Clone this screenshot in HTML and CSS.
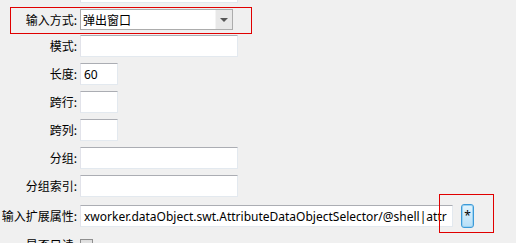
FILE: index.html
```html
<!DOCTYPE html>
<html lang="zh">
<head>
  <meta charset="UTF-8" />
  <title>属性编辑</title>
  <link rel="stylesheet" href="styles.css">
</head>
<body>
  <form class="editor">
    <!-- first row is scrolled mostly out of view -->
    <div class="row row-top">
      <span class="label"></span>
      <input class="text wide" type="text" />
    </div>
    <div class="row row-combo">
      <label class="label">输入方式:</label>
      <div class="combo">
        <span class="combo-value">弹出窗口</span>
        <span class="combo-button"><span class="arrow"></span></span>
      </div>
    </div>
    <div class="row">
      <label class="label">模式:</label>
      <input class="text wide" type="text" />
    </div>
    <div class="row">
      <label class="label">长度:</label>
      <input class="text short" type="text" value="60" />
    </div>
    <div class="row">
      <label class="label">跨行:</label>
      <input class="text short" type="text" />
    </div>
    <div class="row">
      <label class="label">跨列:</label>
      <input class="text short" type="text" />
    </div>
    <div class="row">
      <label class="label">分组:</label>
      <input class="text wide" type="text" />
    </div>
    <div class="row">
      <label class="label">分组索引:</label>
      <input class="text wide" type="text" />
    </div>
    <div class="row row-ext">
      <label class="label">输入扩展属性:</label>
      <input class="text ext" type="text" value="xworker.dataObject.swt.AttributeDataObjectSelector/@shell|attr" />
      <button class="star" type="button">*</button>
    </div>
    <div class="row row-check">
      <label class="label">是否只读:</label>
      <span class="check"></span>
    </div>

    <!-- annotation boxes -->
    <div class="mark mark-combo"></div>
    <div class="mark mark-star"></div>
  </form>
</body>
</html>
```

FILE: styles.css
```css
* {
  margin: 0;
  padding: 0;
  box-sizing: border-box;
}
body {
  background: #f0f0f0;
  color: #000;
  font-family: "Noto Sans CJK SC", "Noto Sans", sans-serif;
  font-size: 12px;
  overflow: hidden;
  height: 243px;
}
.editor {
  position: relative;
  display: flex;
  flex-direction: column;
  gap: 6px;
  margin-top: -19px;
}
.row {
  display: flex;
  align-items: center;
  gap: 3px;
  height: 22px;
}
.label {
  width: 77px;
  flex: none;
  display: flex;
  justify-content: flex-end;
  white-space: nowrap;
  line-height: 16px;
}
.text {
  height: 22px;
  border: 1px solid #e3e9ef;
  border-top-color: #abadb3;
  border-left-color: #e2e3ea;
  background: #fff;
  font-family: "Noto Sans", "Noto Sans CJK SC", sans-serif;
  font-size: 12px;
  padding: 0 3px;
  color: #000;
  outline: none;
}
.wide { width: 158px; }
.short { width: 38px; }
.ext { width: 373px; }

.row-combo {
  height: 21px;
  margin-bottom: -1px;
}
.combo {
  width: 153px;
  height: 21px;
  border: 1px solid #acacac;
  background: #fff;
  display: flex;
  align-items: center;
}
.combo-value {
  flex: 1;
  padding-left: 2px;
  line-height: 16px;
}
.combo-button {
  width: 17px;
  height: 19px;
  background: #e8e8e8;
  border-left: 1px solid #f4f4f4;
  display: flex;
  align-items: center;
  justify-content: center;
}
.arrow {
  width: 0;
  height: 0;
  border-left: 4px solid transparent;
  border-right: 4px solid transparent;
  border-top: 4px solid #555;
}

.row-ext {
  margin-top: 2px;
}
.star {
  margin-left: 5px;
  width: 13px;
  height: 24px;
  border: 1px solid #3c9ad8;
  border-radius: 3px;
  background: linear-gradient(#e3f4fd, #b7dff7);
  box-shadow: inset 0 0 0 1px #9ad2f2;
  font-family: "Noto Sans", sans-serif;
  font-size: 12px;
  line-height: 14px;
  color: #000;
  padding: 0;
}

.row-check {
  margin-top: 3px;
  align-items: flex-start;
}
.row-check .label {
  padding-top: 1px;
}
.check {
  width: 13px;
  height: 13px;
  border: 1px solid #8f8f8f;
  background: linear-gradient(#dcdcdc, #fafafa);
  margin-top: 3px;
}

.mark {
  position: absolute;
  border: 1px solid #e00000;
}
.mark-combo {
  left: 10px;
  top: 26px;
  width: 242px;
  height: 27px;
}
.mark-star {
  left: 439px;
  top: 213px;
  width: 55px;
  height: 39px;
}
```
